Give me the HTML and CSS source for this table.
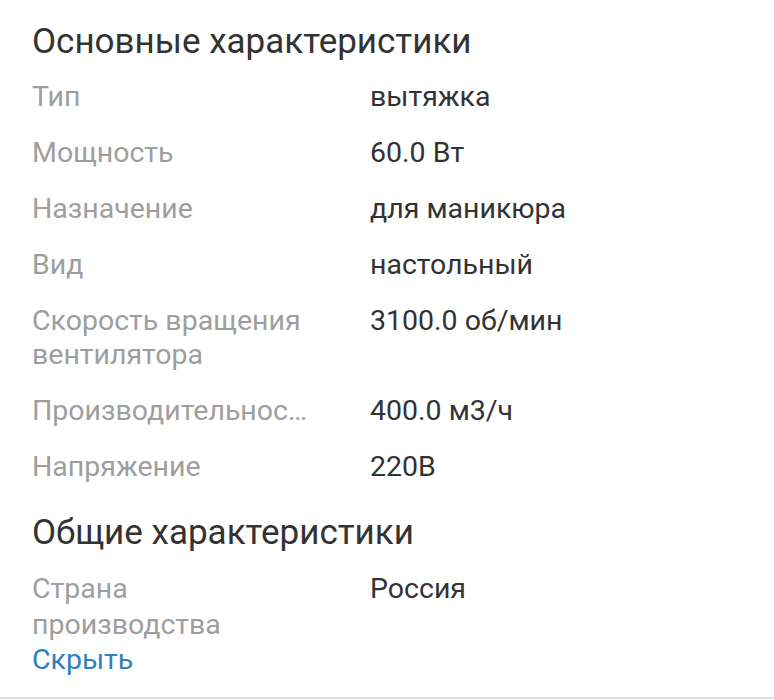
FILE: index.html
```html
<!DOCTYPE html>
<html lang="ru">
<head>
<meta charset="utf-8">
<link rel="stylesheet" href="styles.css">
</head>
<body>
<div class="page">
  <section class="group">
    <h2 class="group-title">Основные характеристики</h2>
    <dl class="specs">
      <div class="row"><dt>Тип</dt><dd>вытяжка</dd></div>
      <div class="row"><dt>Мощность</dt><dd>60.0 Вт</dd></div>
      <div class="row"><dt>Назначение</dt><dd>для маникюра</dd></div>
      <div class="row"><dt>Вид</dt><dd>настольный</dd></div>
      <div class="row"><dt>Скорость вращения вентилятора</dt><dd>3100.0 об/мин</dd></div>
      <div class="row"><dt class="ellipsis" title="Производительность">Производительность</dt><dd>400.0 м3/ч</dd></div>
      <div class="row"><dt>Напряжение</dt><dd>220В</dd></div>
    </dl>
  </section>
  <section class="group">
    <h2 class="group-title">Общие характеристики</h2>
    <dl class="specs">
      <div class="row row-tall"><dt>Страна производства</dt><dd>Россия</dd></div>
    </dl>
  </section>
  <a class="toggle" href="#">Скрыть</a>
</div>
</body>
</html>
```

FILE: styles.css
```css
html, body {
  margin: 0;
  padding: 0;
  background: #fff;
}
body {
  font-family: Roboto, "Noto Sans", sans-serif;
  height: 700px;
  overflow: hidden;
}
.page {
  padding: 20px 32px 0 32px;
  border-bottom: 2px solid #dcdcdc;
  height: 677px;
  box-sizing: content-box;
}
.group-title {
  margin: 0;
  font-weight: 400;
  font-size: 35px;
  line-height: 44px;
  color: #333;
}
.specs {
  margin: 16px 0 0 0;
  display: flex;
  flex-direction: column;
  gap: 22px;
}
.row {
  display: grid;
  grid-template-columns: 280px 1fr;
  column-gap: 58px;
  font-size: 28.5px;
  line-height: 34px;
}
.row-tall {
  line-height: 36px;
}
dt {
  color: #9e9e9e;
  margin: 0;
}
dd {
  margin: 0;
  color: #333;
}
.ellipsis {
  white-space: nowrap;
  overflow: hidden;
  text-overflow: ellipsis;
}
.group + .group {
  margin-top: 27px;
}
.toggle {
  display: block;
  font-size: 28.5px;
  line-height: 34px;
  color: #2f7fc1;
  text-decoration: none;
}
```
